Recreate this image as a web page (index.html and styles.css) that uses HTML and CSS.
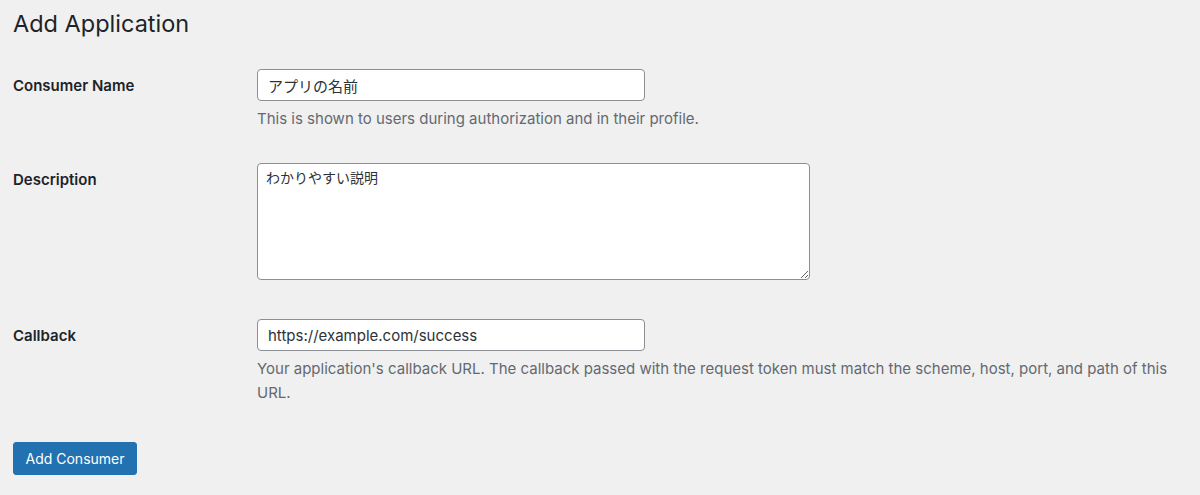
FILE: index.html
```html
<!DOCTYPE html>
<html lang="ja">
<head>
<meta charset="utf-8">
<title>Add Application</title>
<link rel="stylesheet" href="styles.css">
</head>
<body>
<div class="wrap">
  <h1 class="title">Add Application</h1>
  <form class="form">
    <div class="row row-name">
      <label class="label" for="name">Consumer Name</label>
      <div class="field">
        <input class="input" id="name" type="text" value="アプリの名前">
        <p class="desc">This is shown to users during authorization and in their profile.</p>
      </div>
    </div>
    <div class="row row-desc">
      <label class="label" for="description">Description</label>
      <div class="field">
        <textarea class="textarea" id="description">わかりやすい説明</textarea>
      </div>
    </div>
    <div class="row row-cb">
      <label class="label" for="callback">Callback</label>
      <div class="field">
        <input class="input" id="callback" type="text" value="https://example.com/success">
        <p class="desc">Your application's callback URL. The callback passed with the request token must match the scheme, host, port, and path of this URL.</p>
      </div>
    </div>
    <div class="submit">
      <button class="button" type="button">Add Consumer</button>
    </div>
  </form>
</div>
</body>
</html>
```

FILE: styles.css
```css
html, body {
  margin: 0;
  padding: 0;
  background: #f0f0f1;
}
body {
  font-family: Inter, "Noto Sans CJK JP", "Liberation Sans", sans-serif;
  font-size: 15px;
  color: #1d2327;
}
.wrap {
  padding: 0 20px 0 13px;
}
.title {
  margin: 0;
  padding-top: 9px;
  font-size: 23.5px;
  font-weight: 400;
  line-height: 30px;
  color: #1d2327;
}
.form {
  margin-top: 15px;
}
.row {
  display: grid;
  grid-template-columns: 244px 1fr;
}
.row-name { margin-bottom: 2px; }
.row-desc { margin-bottom: 9px; }
.label {
  padding-top: 23px;
  font-weight: 600;
  font-size: 15px;
  line-height: 18px;
  color: #1d2327;
}
.field {
  padding: 15px 10px 15px 0;
}
.input {
  display: block;
  box-sizing: border-box;
  width: 388px;
  height: 32px;
  margin: 0;
  padding: 0 10px;
  border: 1px solid #8c8f94;
  border-radius: 4px;
  background: #fff;
  font-family: Inter, "Noto Sans CJK JP", sans-serif;
  font-size: 15px;
  color: #2c3338;
  outline: none;
}
.textarea {
  display: block;
  box-sizing: border-box;
  width: 553px;
  height: 117px;
  margin: 0;
  padding: 4px 8px;
  border: 1px solid #8c8f94;
  border-radius: 4px;
  background: #fff;
  font-family: Inter, "Noto Sans CJK JP", sans-serif;
  font-size: 14px;
  line-height: 20px;
  color: #2c3338;
  resize: both;
  outline: none;
}
.desc {
  margin: 6px 0 0;
  font-size: 15px;
  line-height: 24px;
  color: #646970;
}
.submit {
  padding-top: 22px;
}
.button {
  display: inline-flex;
  align-items: center;
  justify-content: center;
  box-sizing: border-box;
  width: 124px;
  height: 33px;
  margin: 0;
  padding: 0;
  border: 1px solid #2271b1;
  border-radius: 3px;
  background: #2271b1;
  color: #fff;
  font-family: Inter, "Liberation Sans", sans-serif;
  font-size: 14px;
  cursor: pointer;
}
```
